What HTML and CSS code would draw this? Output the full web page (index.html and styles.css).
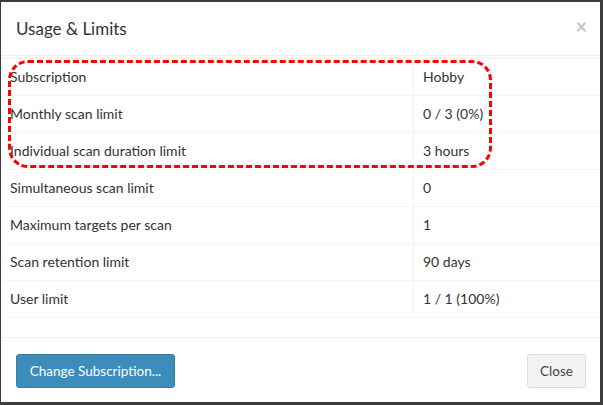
FILE: index.html
```html
<!DOCTYPE html>
<html>
<head>
<meta charset="utf-8">
<link rel="stylesheet" href="styles.css">
</head>
<body>
<div class="modal">
  <div class="modal-header">
    <h4 class="modal-title">Usage &amp; Limits</h4>
    <span class="close">×</span>
  </div>
  <div class="modal-body">
    <table class="limits">
      <tr><td>Subscription</td><td>Hobby</td></tr>
      <tr><td>Monthly scan limit</td><td>0 / 3 (0%)</td></tr>
      <tr><td>Individual scan duration limit</td><td>3 hours</td></tr>
      <tr><td>Simultaneous scan limit</td><td>0</td></tr>
      <tr><td>Maximum targets per scan</td><td>1</td></tr>
      <tr><td>Scan retention limit</td><td>90 days</td></tr>
      <tr><td>User limit</td><td>1 / 1 (100%)</td></tr>
    </table>
    <div class="annotation"></div>
  </div>
  <div class="modal-footer">
    <button class="btn btn-primary">Change Subscription...</button>
    <button class="btn btn-default">Close</button>
  </div>
</div>
</body>
</html>
```

FILE: styles.css
```css
html, body {
  margin: 0;
  padding: 0;
}
body {
  background: #3c3c3c;
  width: 603px;
  height: 405px;
  overflow: hidden;
  font-family: Lato, "Noto Sans", sans-serif;
  font-size: 14px;
  color: #333;
}
.modal {
  box-sizing: border-box;
  margin: 2px 3px 0 1px;
  width: 599px;
  height: 400px;
  background: #fff;
  display: flex;
  flex-direction: column;
}
.modal-header {
  display: flex;
  justify-content: space-between;
  align-items: flex-start;
  padding: 16px 15px 15px 15px;
  border-bottom: 1px solid #f0f0f0;
  height: 25px;
}
.modal-title {
  margin: 0;
  font-size: 17px;
  font-weight: 400;
  line-height: 22px;
  color: #333;
}
.close {
  font-size: 20px;
  font-weight: 700;
  color: #c4c4c4;
  line-height: 18px;
  margin-right: -2px;
  margin-top: -1px;
}
.modal-body {
  position: relative;
  padding: 1px 0 19px 1px;
}
.limits {
  width: 598px;
  border-collapse: collapse;
  border-top: 2px solid #f4f4f4;
}
.limits td {
  padding: 8px 8px 8px 8px;
  line-height: 20px;
  border-bottom: 1px solid #f4f4f4;
  height: 20px;
}
.limits td:first-child {
  width: 395px;
  border-right: 1px solid #f4f4f4;
}
.limits td:last-child {
  padding-left: 9px;
}
.annotation {
  position: absolute;
  left: 7px;
  top: 4px;
  width: 478px;
  height: 102px;
  border: 3px dashed #ff0000;
  border-radius: 20px;
  pointer-events: none;
}
.modal-footer {
  border-top: 1px solid #f0f0f0;
  padding: 16px 14px 14px 15px;
  display: flex;
  justify-content: space-between;
  align-items: center;
}
.btn {
  font-family: inherit;
  font-size: 13.5px;
  line-height: 20px;
  padding: 6px 10px;
  border-radius: 3px;
  border: 1px solid transparent;
  height: 34px;
  box-sizing: border-box;
  white-space: nowrap;
}
.btn-primary {
  background: #3c8dbc;
  border-color: #367fa9;
  color: #fff;
  width: 159px;
}
.btn-default {
  background: #f4f4f4;
  border-color: #ddd;
  color: #444;
  width: 59px;
}
```
